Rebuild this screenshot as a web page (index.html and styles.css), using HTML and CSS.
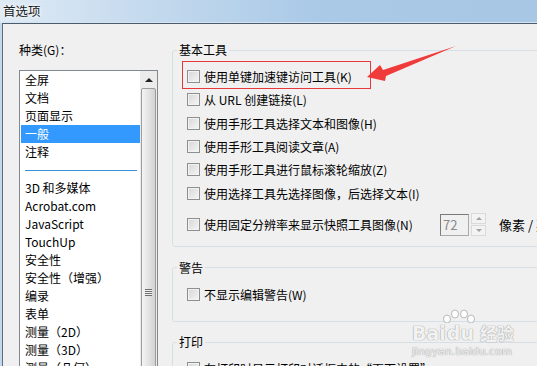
FILE: index.html
```html
<!DOCTYPE html>
<html lang="zh-CN">
  <head>
    <meta charset="UTF-8" />
    <title>首选项</title>
    <link rel="stylesheet" href="styles.css">
  </head>
  <body>
    <div class="titlebar"><span class="title">首选项</span></div>

    <div class="window">
      <div class="categories">
        <div class="cat-label">种类(G)：</div>
        <div class="listbox">
          <ul class="cat-list">
            <li>全屏</li>
            <li>文档</li>
            <li>页面显示</li>
            <li class="selected">一般</li>
            <li>注释</li>
            <li class="sep"><span></span></li>
            <li>3D 和多媒体</li>
            <li>Acrobat.com</li>
            <li>JavaScript</li>
            <li>TouchUp</li>
            <li>安全性</li>
            <li>安全性（增强）</li>
            <li>编录</li>
            <li>表单</li>
            <li>测量（2D）</li>
            <li>测量（3D）</li>
            <li>测量（几何）</li>
          </ul>
          <div class="scrollbar">
            <div class="scroll-up"><span class="tri"></span></div>
            <div class="scroll-thumb"><span class="grip"></span></div>
          </div>
        </div>
      </div>

      <div class="panels">
        <fieldset class="group group-basic">
          <legend>基本工具</legend>
          <div class="opt"><span class="box"></span>使用单键加速键访问工具(K)</div>
          <div class="opt"><span class="box"></span>从 URL 创建链接(L)</div>
          <div class="opt"><span class="box"></span>使用手形工具选择文本和图像(H)</div>
          <div class="opt"><span class="box"></span>使用手形工具阅读文章(A)</div>
          <div class="opt"><span class="box"></span>使用手形工具进行鼠标滚轮缩放(Z)</div>
          <div class="opt"><span class="box"></span>使用选择工具先选择图像，后选择文本(I)</div>
          <div class="opt opt-res">
            <span class="box"></span>
            <span class="res-label">使用固定分辨率来显示快照工具图像(N)</span>
            <span class="spin-input">72</span>
            <span class="spin-btns">
              <span class="spin-btn"><span class="tri-up"></span></span>
              <span class="spin-btn"><span class="tri-down"></span></span>
            </span>
            <span class="unit">像素 / 英寸</span>
          </div>
        </fieldset>

        <fieldset class="group group-warn">
          <legend>警告</legend>
          <div class="opt"><span class="box"></span>不显示编辑警告(W)</div>
        </fieldset>

        <fieldset class="group group-print">
          <legend>打印</legend>
          <div class="opt"><span class="box"></span>在打印时显示打印对话框中的“页面设置”</div>
        </fieldset>
      </div>
    </div>

    <!-- annotation drawn over the dialog -->
    <svg class="callout" width="537" height="366" viewBox="0 0 537 366">
      <rect x="182.5" y="61.5" width="188" height="27" fill="none" stroke="#e8393a" stroke-width="1" />
      <polygon points="367,77 380,65 383,70 456,46 386,76 385,81" fill="#f03b3b" />
    </svg>

    <div class="watermark">
      <div class="wm-logo">
        <span class="wm-bai">Bai</span>
        <span class="wm-du">
          <svg class="paw" width="34" height="14" viewBox="0 0 34 14">
            <ellipse cx="5" cy="10" rx="3.5" ry="4" />
            <ellipse cx="13" cy="5" rx="3.5" ry="4" />
            <ellipse cx="22" cy="5" rx="3.5" ry="4" />
            <ellipse cx="29" cy="10" rx="3.5" ry="4" />
          </svg>
          du
        </span>
        <span class="wm-jy">经验</span>
      </div>
      <div class="wm-url">jingyan.baidu.com</div>
    </div>
  </body>
</html>
```

FILE: styles.css
```css
html,
body {
  margin: 0;
  padding: 0;
  width: 537px;
  height: 366px;
  overflow: hidden;
}
body {
  position: relative;
  background: linear-gradient(to right, #c3d8ec, #a8c8e6);
  font-family: "Noto Sans CJK SC", "Noto Sans", sans-serif;
  font-size: 12px;
  color: #000;
}

.titlebar {
  height: 22px;
  border-bottom: 1px solid #d4e4f3;
  display: flex;
  align-items: center;
  padding-left: 3px;
  background: linear-gradient(to right, #dfeaf5 0%, #c6dbee 25%, #a9c9e7 60%, #a7c7e5 100%);
}
.title {
  font-size: 12.5px;
  line-height: 16px;
  color: #1a1a1a;
  text-shadow: 0 0 6px #fff, 0 0 3px #fff;
}

.window {
  margin-left: 2px;
  height: 400px;
  display: flex;
  gap: 14px;
  background: #f0f0f0;
  border-top: 1px solid #4c5c6c;
  border-left: 1px solid #5d6d7d;
}

/* Left: category list */
.categories {
  padding: 18px 0 0 16px;
  width: 139px;
  flex: none;
}
.cat-label {
  line-height: 16px;
  height: 16px;
  margin-bottom: 12px;
}
.listbox {
  display: flex;
  height: 450px;
  background: #fff;
  border: 1px solid #828790;
}
.cat-list {
  list-style: none;
  margin: 0;
  padding: 0;
  flex: 1;
}
.cat-list li {
  height: 18px;
  line-height: 18px;
  margin: 0 0 0 1px;
  padding-left: 4px;
  white-space: nowrap;
}
.cat-list li.selected {
  background: #3399ff;
  color: #fff;
}
.cat-list li.sep {
  display: flex;
  align-items: center;
  padding: 0 3px 0 4px;
}
.cat-list li.sep span {
  flex: 1;
  height: 1px;
  background: #3d8fd8;
}
.scrollbar {
  width: 17px;
  flex: none;
  background: #ebebeb;
  display: flex;
  flex-direction: column;
  align-items: center;
}
.scroll-up {
  height: 17px;
  width: 17px;
  display: flex;
  align-items: center;
  justify-content: center;
}
.tri {
  width: 0;
  height: 0;
  border-left: 4px solid transparent;
  border-right: 4px solid transparent;
  border-bottom: 4px solid #222;
}
.scroll-thumb {
  width: 13px;
  height: 406px;
  border: 1px solid #9d9d9d;
  border-radius: 2px;
  background: linear-gradient(to right, #f4f4f4, #e3e3e3 50%, #d2d2d2);
  display: flex;
  align-items: center;
  justify-content: center;
}
.grip {
  width: 7px;
  height: 5px;
  border-top: 1px solid #6e6e6e;
  border-bottom: 1px solid #6e6e6e;
  background: linear-gradient(#f0f0f0 0 1px, #6e6e6e 1px 2px, #f0f0f0 2px 3px, #6e6e6e 3px 4px, #f0f0f0 4px);
}

/* Right: option groups */
.panels {
  padding-top: 18px;
  width: 400px;
  flex: none;
}
.group {
  margin: 0;
  min-width: 0;
  border: 1px solid #d5dfe5;
  border-radius: 3px;
  padding: 7px 0 0 14px;
}
.group legend {
  line-height: 16px;
  padding: 0 2px;
  margin-left: -10px;
}
.group-basic {
  padding-bottom: 9px;
}
.group-warn {
  margin-top: 13px;
  padding-bottom: 15px;
}
.group-print {
  margin-top: 12px;
  height: 60px;
}

.opt {
  height: 23.3px;
  display: flex;
  align-items: center;
  white-space: nowrap;
}
.box {
  width: 11px;
  height: 11px;
  flex: none;
  margin-right: 4px;
  border: 1px solid #8e8f8f;
  background: linear-gradient(135deg, #d6d6d6, #f6f6f6);
  box-shadow: inset 0 0 0 1px #f2f2f2;
}
.opt-res {
  margin-top: 8px;
  height: 24px;
}
.res-label {
  width: 236px;
  flex: none;
}
.spin-input {
  width: 25px;
  height: 20px;
  line-height: 20px;
  padding-left: 2px;
  border: 1px solid #aaa;
  border-top-color: #7a7a7a;
  border-left-color: #7a7a7a;
  color: #8a8a8a;
  font-size: 13px;
}
.spin-btns {
  margin-left: 2px;
  width: 15px;
  height: 23px;
  display: flex;
  flex-direction: column;
  gap: 1px;
}
.spin-btn {
  flex: 1;
  border: 1px solid #dadada;
  background: #f3f3f3;
  display: flex;
  align-items: center;
  justify-content: center;
}
.tri-up,
.tri-down {
  width: 0;
  height: 0;
  border-left: 3px solid transparent;
  border-right: 3px solid transparent;
}
.tri-up {
  border-bottom: 3px solid #a0a0a0;
}
.tri-down {
  border-top: 3px solid #a0a0a0;
}
.unit {
  margin-left: 13px;
  font-size: 13px;
}

/* overlays */
.callout {
  position: absolute;
  left: 0;
  top: 0;
  pointer-events: none;
}
.watermark {
  position: absolute;
  left: 412px;
  top: 309px;
  color: rgba(255, 255, 255, 0.9);
  text-shadow: 0 0 1px #9a9a9a, 0 0 1px #9a9a9a;
  font-family: "DejaVu Sans", sans-serif;
}
.wm-logo {
  display: flex;
  align-items: flex-end;
  font-size: 19px;
  font-weight: bold;
  line-height: 20px;
}
.wm-du {
  position: relative;
  padding-top: 14px;
  margin-left: 1px;
}
.paw {
  position: absolute;
  left: -5px;
  top: 0;
  fill: rgba(255, 255, 255, 0.9);
  stroke: #a8a8a8;
  stroke-width: 0.8;
}
.wm-jy {
  margin-left: 6px;
  font-family: "Noto Sans CJK SC", sans-serif;
  font-size: 17px;
}
.wm-url {
  margin-top: 2px;
  font-size: 10.5px;
  letter-spacing: 0.2px;
}
```
